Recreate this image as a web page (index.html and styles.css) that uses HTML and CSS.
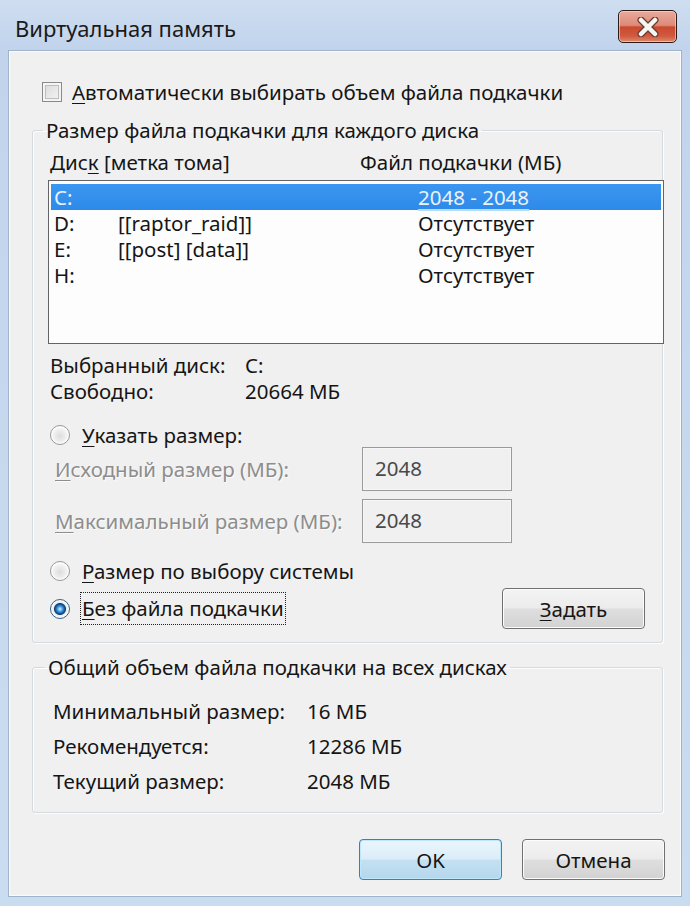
FILE: index.html
```html
<!DOCTYPE html>
<html lang="ru">
<head>
<meta charset="utf-8">
<title>Виртуальная память</title>
<link rel="stylesheet" href="styles.css">
</head>
<body>
<div class="window">
  <div class="titlebar">
    <span class="title">Виртуальная память</span>
    <button class="close" aria-label="Закрыть">
      <svg width="26" height="20" viewBox="0 0 26 20">
        <path d="M6 3 L20 17 M20 3 L6 17" stroke="#6b3a30" stroke-width="7" stroke-linecap="round"/>
        <path d="M6 3 L20 17 M20 3 L6 17" stroke="#f4f6f2" stroke-width="4.5" stroke-linecap="round"/>
      </svg>
    </button>
  </div>
  <div class="content">
    <label class="auto-row"><span class="checkbox"></span><span><u>А</u>втоматически выбирать объем файла подкачки</span></label>

    <fieldset class="group group-disks">
      <legend>Размер файла подкачки для каждого диска</legend>
      <div class="list-head"><span class="col-disk">Дис<u>к</u> [метка тома]</span><span>Файл подкачки (МБ)</span></div>
      <div class="listbox">
        <div class="row selected"><span class="c1">C:</span><span class="c2"></span><span class="c3 focus-text">2048 - 2048</span></div>
        <div class="row"><span class="c1">D:</span><span class="c2">[[raptor_raid]]</span><span class="c3">Отсутствует</span></div>
        <div class="row"><span class="c1">E:</span><span class="c2">[[post] [data]]</span><span class="c3">Отсутствует</span></div>
        <div class="row"><span class="c1">H:</span><span class="c2"></span><span class="c3">Отсутствует</span></div>
      </div>
      <div class="info">
        <span>Выбранный диск:</span><span>C:</span>
        <span>Свободно:</span><span>20664 МБ</span>
      </div>
      <label class="radio-row spec"><span class="radio"></span><span><u>У</u>казать размер:</span></label>
      <div class="field-row"><span class="field-label"><u>И</u>сходный размер (МБ):</span><span class="input">2048</span></div>
      <div class="field-row second"><span class="field-label"><u>М</u>аксимальный размер (МБ):</span><span class="input">2048</span></div>
      <label class="radio-row system"><span class="radio"></span><span><u>Р</u>азмер по выбору системы</span></label>
      <div class="last-row">
        <label class="radio-row nofile"><span class="radio checked"></span><span class="focus-rect"><u>Б</u>ез файла подкачки</span></label>
        <button class="btn set"><u>З</u>адать</button>
      </div>
    </fieldset>

    <fieldset class="group group-total">
      <legend>Общий объем файла подкачки на всех дисках</legend>
      <div class="totals">
        <span>Минимальный размер:</span><span>16 МБ</span>
        <span>Рекомендуется:</span><span>12286 МБ</span>
        <span>Текущий размер:</span><span>2048 МБ</span>
      </div>
    </fieldset>

    <div class="actions">
      <button class="btn default">OK</button>
      <button class="btn">Отмена</button>
    </div>
  </div>
</div>
</body>
</html>
```
FILE: styles.css
```css
html, body {
  margin: 0;
  padding: 0;
}
body {
  background: #c6d8ee;
  font-family: "Noto Sans", "Open Sans", "DejaVu Sans", sans-serif;
  font-size: 20.5px;
  line-height: 26px;
  color: #151515;
}
u {
  text-decoration: underline;
  text-underline-offset: 3px;
  text-decoration-thickness: 1px;
}
.window {
  width: 690px;
  height: 906px;
  display: flex;
  flex-direction: column;
  background: linear-gradient(to bottom, #cfdef1 0px, #c1d4ec 48px, #c4d7ee 300px, #cadcf0 906px);
  overflow: hidden;
}
.titlebar {
  height: 50px;
  flex-shrink: 0;
  display: flex;
  align-items: flex-start;
}
.title {
  margin: 14px 0 0 15px;
  font-size: 22px;
  line-height: 28px;
  color: #1a1a1a;
}
.close {
  margin: 10px 13px 0 auto;
  width: 59px;
  height: 33px;
  padding: 0;
  border: 1px solid #2e1a18;
  border-radius: 5px;
  background: linear-gradient(to bottom, #e9aa9b 0%, #de8a77 46%, #c9492e 52%, #d0593d 80%, #dd8a6a 100%);
  box-shadow: inset 0 0 0 1px rgba(255, 220, 210, 0.6);
  display: flex;
  align-items: center;
  justify-content: center;
}
.content {
  flex: 1;
  margin: 0 8px 9px 8px;
  background: #f0f0f0;
  border: 1px solid #9fb3cb;
  display: flex;
  flex-direction: column;
  box-shadow: inset 0 0 0 1px #fbfbfb;
}
.auto-row {
  display: flex;
  align-items: center;
  gap: 10px;
  height: 24px;
  margin: 29px 0 0 33px;
}
.checkbox {
  width: 20px;
  height: 20px;
  box-sizing: border-box;
  border: 1px solid #8a8a8a;
  background: linear-gradient(135deg, #d8d8d8, #f7f7f7);
  box-shadow: inset 0 0 0 2px #f4f4f4, inset 0 0 0 3px #bdbdbd;
}
.group {
  margin: 13px 18px 0 23px;
  padding: 0 0 13px 0;
  border: 1px solid #d5dadf;
  border-radius: 3px;
  min-width: 0;
  box-shadow: inset 1px 1px 0 #fdfdfd, 1px 1px 0 #fdfdfd;
}
.group legend {
  padding: 0 3px;
  margin-left: 10px;
  line-height: 26px;
}
.group-total {
  margin-top: 11px;
  padding-bottom: 14px;
}
.group-total legend {
  margin-left: 12px;
}
.list-head {
  display: flex;
  height: 26px;
  margin: 6px 0 0 17px;
}
.col-disk {
  width: 310px;
}
.listbox {
  margin: 5px -2px 0 15px;
  height: 164px;
  box-sizing: border-box;
  border: 1px solid #646464;
  background: #fdfdfd;
  padding: 3px 2px;
}
.row {
  height: 26px;
  display: flex;
  align-items: center;
  padding-left: 3px;
}
.row.selected {
  background: linear-gradient(to bottom, #3a97f0, #2e8ae8);
  color: #e8f3ff;
}
.c1 {
  width: 64px;
}
.c2 {
  width: 300px;
}
.focus-text {
  text-decoration: underline;
  text-decoration-color: #b8dcff;
  text-underline-offset: 4px;
}
.info {
  margin: 8px 0 0 17px;
  display: grid;
  grid-template-columns: 195px auto;
}
.radio-row {
  display: flex;
  align-items: center;
  gap: 12px;
  height: 24px;
  margin-left: 17px;
}
.radio-row.spec {
  margin-top: 19px;
}
.radio-row.system {
  margin-top: 16px;
}
.radio {
  width: 20px;
  height: 20px;
  box-sizing: border-box;
  border-radius: 50%;
  border: 1px solid #989898;
  background: radial-gradient(circle at 50% 55%, #dcdcdc 0, #ececec 5px, #fafafa 9px);
  box-shadow: inset 0 0 0 1px #ffffff;
  flex-shrink: 0;
}
.radio.checked {
  border-color: #3a5f86;
  background: radial-gradient(circle at 50% 50%, #d7f0ff 0, #5fb4ec 2px, #1c6cb5 4px, #0f3c6e 5.5px, #e9eef3 6.5px, #f6f6f6 9px);
}
.field-row {
  display: flex;
  align-items: center;
  height: 44px;
  margin-left: 22px;
}
.field-row.second {
  margin-top: 8px;
}
.field-label {
  width: 307px;
  color: #8d8d8d;
  text-shadow: 1px 1px 0 #fbfbfb;
}
.input {
  width: 150px;
  height: 44px;
  box-sizing: border-box;
  border: 1px solid #9a9a9a;
  background: #f0f0f0;
  box-shadow: inset 0 0 0 1px #f7f7f7;
  padding: 5px 12px 0;
  line-height: 30px;
  color: #4a4a4a;
}
.last-row {
  display: flex;
  align-items: center;
  justify-content: space-between;
  height: 41px;
  margin-top: 5px;
}
.radio-row.nofile {
  gap: 10px;
  height: auto;
}
.focus-rect {
  border: 1px dotted #222;
  padding: 3px 1px;
  line-height: 25px;
}
.btn {
  width: 143px;
  height: 41px;
  padding: 0;
  border: 1px solid #707070;
  border-radius: 4px;
  background: linear-gradient(to bottom, #f3f3f3 0%, #ececec 48%, #dedede 52%, #d2d2d2 100%);
  box-shadow: inset 0 0 0 1px #fbfbfb;
  font: inherit;
  color: #151515;
}
.btn.set {
  margin-right: 17px;
}
.btn.default {
  border-color: #3c7fb1;
  background: linear-gradient(to bottom, #e9f5fc 0%, #dcedf8 48%, #c4e1f3 52%, #b5d6ec 100%);
  box-shadow: inset 0 0 0 1px #bfe7fb;
}
.totals {
  margin: 13px 0 0 20px;
  display: grid;
  grid-template-columns: 254px auto;
  grid-auto-rows: 35px;
  align-items: center;
}
.actions {
  display: flex;
  justify-content: flex-end;
  gap: 20px;
  margin: 26px 16px 0 0;
}
```
